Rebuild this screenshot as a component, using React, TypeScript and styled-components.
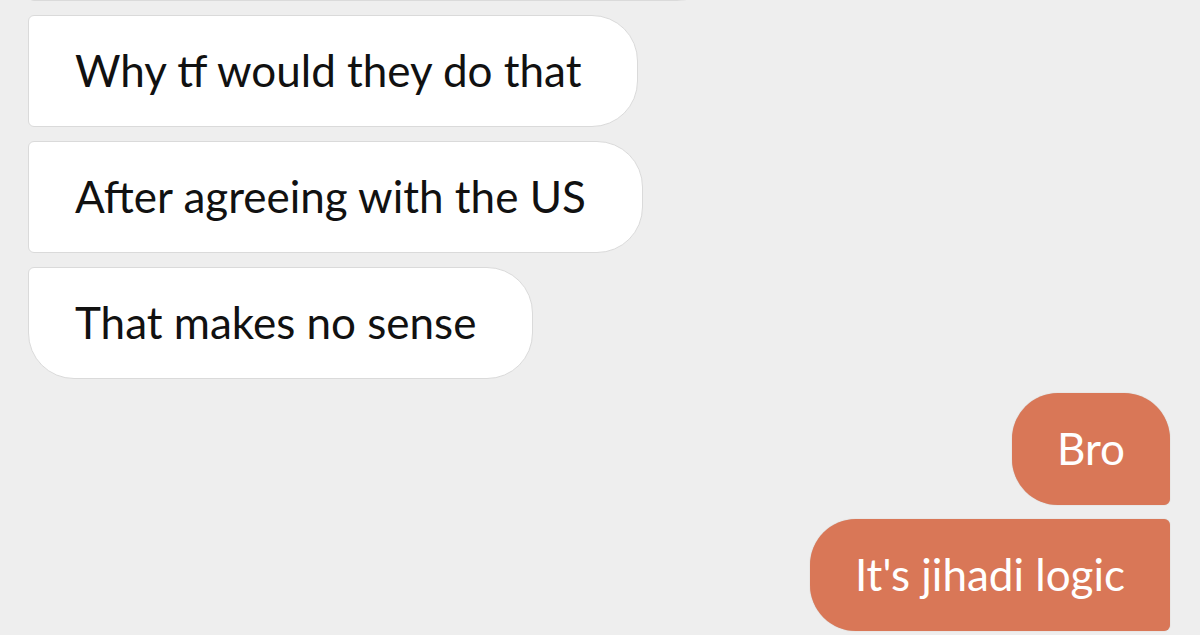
import React from "react";
import styled, { createGlobalStyle, css } from "styled-components";

const GlobalStyle = createGlobalStyle`
  html, body {
    margin: 0;
    padding: 0;
    background: #eeeeee;
  }
  body {
    font-family: "Lato", "Open Sans", sans-serif;
  }
`;

const Thread = styled.div`
  box-sizing: border-box;
  height: 635px;
  overflow: hidden;
  display: flex;
  flex-direction: column;
  justify-content: flex-end;
  gap: 14px;
  padding: 0 30px 4px 28px;
  background: #eeeeee;
`;

const Row = styled.div<{ $mine?: boolean }>`
  display: flex;
  justify-content: ${(p) => (p.$mine ? "flex-end" : "flex-start")};
`;

type Corners = { tl: boolean; tr: boolean; br: boolean; bl: boolean };

const BIG = 46;
const SMALL = 6;

const Bubble = styled.div<{ $mine?: boolean; $c: Corners; $w?: number }>`
  box-sizing: border-box;
  height: 112px;
  display: flex;
  align-items: center;
  white-space: nowrap;
  font-size: 44px;
  line-height: 1;
  ${(p) => (p.$w ? `width: ${p.$w}px;` : "")}
  border-radius: ${(p) =>
    [p.$c.tl, p.$c.tr, p.$c.br, p.$c.bl]
      .map((b) => (b ? BIG : SMALL) + "px")
      .join(" ")};
  ${(p) =>
    p.$mine
      ? css`
          background: #d97757;
          color: #ffffff;
          padding: 0 45px 2px 45px;
          box-shadow: 0 0 1px rgba(120, 60, 30, 0.35);
        `
      : css`
          background: #ffffff;
          color: #111111;
          border: 1px solid #dadada;
          padding: 0 56px 2px 46px;
        `}
`;

type Msg = { text: string; mine?: boolean; c: Corners; w?: number };

const messages: Msg[] = [
  { text: "", c: { tl: true, tr: true, br: true, bl: false }, w: 695 },
  { text: "Why tf would they do that", c: { tl: false, tr: true, br: true, bl: false } },
  { text: "After agreeing with the US", c: { tl: false, tr: true, br: true, bl: false } },
  { text: "That makes no sense", c: { tl: false, tr: true, br: true, bl: true } },
  { text: "Bro", mine: true, c: { tl: true, tr: true, br: false, bl: true } },
  { text: "It's jihadi logic", mine: true, c: { tl: true, tr: false, br: false, bl: true } },
];

export default function App() {
  return (
    <>
      <GlobalStyle />
      <Thread>
        {messages.map((m, i) => (
          <Row key={i} $mine={m.mine}>
            <Bubble $mine={m.mine} $c={m.c} $w={m.w}>
              {m.text}
            </Bubble>
          </Row>
        ))}
      </Thread>
    </>
  );
}
